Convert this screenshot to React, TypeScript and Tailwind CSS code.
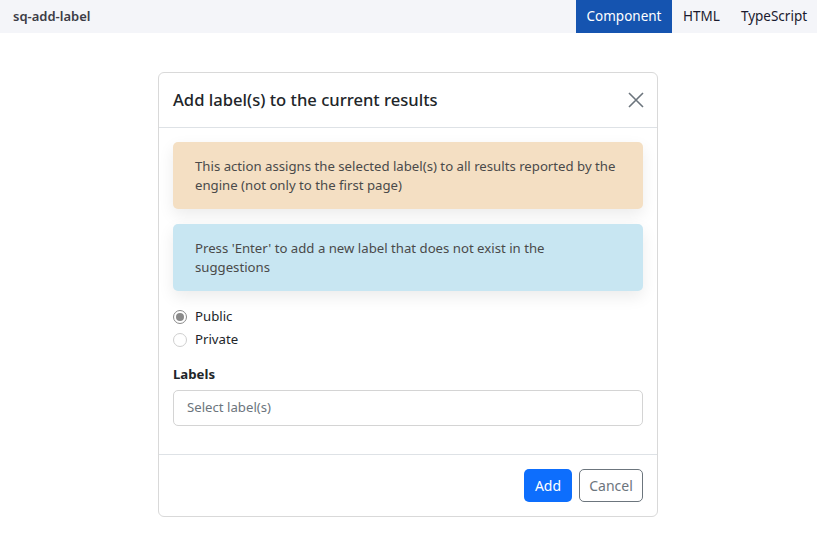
import React from 'react';

const tabs = [
  { name: 'Component', w: 'w-[96px]' },
  { name: 'HTML', w: 'w-[59px]' },
  { name: 'TypeScript', w: 'w-[86px]' },
];

const Alert = ({ tone, children }: { tone: string; children: React.ReactNode }) => (
  <div
    className={`rounded-[5px] pl-[22px] pr-[24px] pt-[15px] pb-[14px] text-[13.2px] leading-[19px] text-[#4a4a4a] shadow-[0_6px_16px_rgba(0,0,0,0.08)] ${tone}`}
  >
    {children}
  </div>
);

export default function App() {
  return (
    <div className="min-h-[556px] bg-white font-['Noto_Sans',sans-serif] text-[#212529]">
      <div className="flex h-[33px] items-center justify-between bg-[#f4f5f9]">
        <span className="pl-[13px] text-[13px] font-semibold text-[#3c3c46]">sq-add-label</span>
        <div className="flex h-full">
          {tabs.map((t, i) => (
            <div
              key={t.name}
              className={`flex h-full items-center justify-center text-[13.5px] ${t.w} ${
                i === 0 ? 'bg-[#1554b0] text-white' : 'text-[#1a1a2e]'
              }`}
            >
              {t.name}
            </div>
          ))}
        </div>
      </div>

      <div className="flex justify-center pr-px pt-[39px]">
        <div className="w-[500px] rounded-[6px] border border-[#d9d9d9] bg-white">
          <div className="flex h-[55px] items-center justify-between border-b border-[#dee2e6] pl-[14px] pr-[13px]">
            <h2 className="text-[16.6px] font-medium text-[#212529]">Add label(s) to the current results</h2>
            <svg width="16" height="16" viewBox="0 0 16 16" className="text-[#6c757d]">
              <path d="M1 1L15 15M15 1L1 15" stroke="currentColor" strokeWidth="1.6" />
            </svg>
          </div>

          <div className="flex flex-col px-[14px] pt-[14px] pb-[28px]">
            <Alert tone="bg-[#f4dfc3]">
              This action assigns the selected label(s) to all results reported by the engine (not only to the first page)
            </Alert>
            <div className="h-[15px]" />
            <Alert tone="bg-[#c8e6f2]">Press 'Enter' to add a new label that does not exist in the suggestions</Alert>

            <div className="mt-[14px] flex flex-col text-[13.2px]">
              <label className="flex h-[23px] items-center gap-[8px]">
                <span className="flex h-[14px] w-[14px] items-center justify-center rounded-full border border-[#8a8a8a]">
                  <span className="h-[8px] w-[8px] rounded-full bg-[#8a8a8a]" />
                </span>
                Public
              </label>
              <label className="flex h-[23px] items-center gap-[8px]">
                <span className="h-[14px] w-[14px] rounded-full border border-[#cfcfcf]" />
                Private
              </label>
            </div>

            <div className="mt-[13px] text-[13.2px] font-bold leading-[20px]">Labels</div>
            <div className="mt-[6px] flex h-[36px] items-center rounded-[5px] border border-[#d4d4d4] px-[13px] text-[13.2px] text-[#6c757d]">
              Select label(s)
            </div>
          </div>

          <div className="flex justify-end gap-[7px] border-t border-[#dee2e6] px-[14px] pt-[14px] pb-[14px]">
            <button className="h-[33px] w-[48px] rounded-[5px] bg-[#0d6efd] text-[14px] text-white">Add</button>
            <button className="h-[33px] w-[64px] rounded-[5px] border border-[#6c757d] text-[14px] text-[#6c757d]">
              Cancel
            </button>
          </div>
        </div>
      </div>
    </div>
  );
}
